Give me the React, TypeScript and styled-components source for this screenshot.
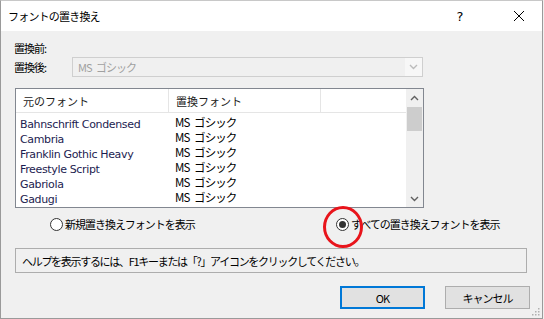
import React from 'react';
import styled, { createGlobalStyle } from 'styled-components';

const GlobalStyle = createGlobalStyle`
    html, body {
        margin: 0;
        padding: 0;
        background: #f0f0f0;
    }
    * { box-sizing: border-box; }
`;

const ui = `"Noto Sans CJK JP", "DejaVu Sans", sans-serif`;

const Dialog = styled.div`
    width: 543px;
    height: 319px;
    border: 1px solid #9a9a9a;
    border-top-color: #c8c8c8;
    background: #f0f0f0;
    display: flex;
    flex-direction: column;
    font-family: ${ui};
    font-size: 11px;
    letter-spacing: -1px;
    word-spacing: 3px;
    color: #000;
    position: relative;
    white-space: nowrap;
`;

const TitleBar = styled.div`
    height: 30px;
    background: #fff;
    display: flex;
    align-items: center;
    padding-left: 7px;
`;

const Title = styled.div`
    flex: 1;
    font-size: 11px;
    letter-spacing: -0.8px;
`;

const CaptionButton = styled.div<{ $gap?: number }>`
    width: 46px;
    height: 30px;
    margin-right: ${p => p.$gap ?? 0}px;
    display: flex;
    align-items: center;
    justify-content: center;
    font-family: "DejaVu Sans", sans-serif;
    font-size: 13px;
    letter-spacing: 0;
`;

const Body = styled.div`
    flex: 1;
    padding: 8px 0 0 13px;
    display: flex;
    flex-direction: column;
`;

const FieldRow = styled.div<{ $h: number }>`
    display: flex;
    align-items: center;
    height: ${p => p.$h}px;
`;

const Label = styled.div`
    width: 58px;
`;

const Combo = styled.div`
    width: 351px;
    height: 20px;
    border: 1px solid #cfcfcf;
    background: #f0f0f0;
    display: flex;
    align-items: center;
    padding-left: 5px;
    color: #a0a0a0;
`;

const ComboText = styled.div`
    flex: 1;
`;

const ComboArrow = styled.div`
    width: 17px;
    height: 18px;
    background: #f7f7f7;
    display: flex;
    align-items: center;
    justify-content: center;
`;

const List = styled.div`
    margin-top: 11px;
    margin-left: 1px;
    width: 409px;
    height: 120px;
    border: 1px solid #828790;
    background: #fff;
    display: flex;
`;

const ListMain = styled.div`
    flex: 1;
    display: flex;
    flex-direction: column;
`;

const Header = styled.div`
    height: 24px;
    display: flex;
    border-bottom: 1px solid #e5e5e5;
`;

const HeaderCell = styled.div<{ $w: number }>`
    width: ${p => p.$w}px;
    height: 100%;
    display: flex;
    align-items: center;
    padding-left: 7px;
    border-right: 1px solid #e5e5e5;
    color: #1a1a1a;
    letter-spacing: 0;
`;

const Rows = styled.div`
    padding-top: 2px;
    display: flex;
    flex-direction: column;
`;

const Row = styled.div`
    height: 15px;
    line-height: 15px;
    display: flex;
    align-items: center;
`;

const FontName = styled.div`
    width: 152px;
    padding-left: 4px;
    font-family: "DejaVu Sans", sans-serif;
    font-size: 11px;
    letter-spacing: -0.35px;
    word-spacing: 0;
    color: #1c1c50;
    transform: translateY(2px);
`;

const Replacement = styled.div`
    padding-left: 7px;
    font-size: 11.5px;
    letter-spacing: -0.9px;
`;

const ScrollBar = styled.div`
    width: 17px;
    background: #f0f0f0;
    display: flex;
    flex-direction: column;
`;

const ScrollArrow = styled.div`
    height: 17px;
    display: flex;
    align-items: center;
    justify-content: center;
`;

const Thumb = styled.div`
    height: 24px;
    margin: 1px 1px 0;
    background: #cdcdcd;
`;

const Track = styled.div`
    flex: 1;
`;

const RadioRow = styled.div`
    display: flex;
    align-items: center;
    height: 18px;
    margin-top: 7px;
    padding-left: 36px;
`;

const RadioItem = styled.label<{ $w?: number }>`
    display: flex;
    align-items: center;
    width: ${p => (p.$w ? `${p.$w}px` : 'auto')};
    gap: 2px;
`;

const RadioCircle = styled.span<{ $checked?: boolean }>`
    width: 13px;
    height: 13px;
    border-radius: 50%;
    border: 1px solid #333;
    background: #fff;
    display: flex;
    align-items: center;
    justify-content: center;
    &::after {
        content: '';
        width: 7px;
        height: 7px;
        border-radius: 50%;
        background: ${p => (p.$checked ? '#333' : 'transparent')};
    }
`;

const Highlight = styled.div`
    position: absolute;
    left: 322px;
    top: 205px;
    width: 40px;
    height: 42px;
    border: 3px solid #e8141b;
    border-radius: 50%;
    pointer-events: none;
`;

const HelpBox = styled.div`
    margin-top: 15px;
    margin-left: 1px;
    width: 512px;
    height: 25px;
    border: 1px solid #adadad;
    display: flex;
    align-items: center;
    padding-left: 6px;
    letter-spacing: -1.3px;
    word-spacing: 0;
`;

const ButtonRow = styled.div`
    display: flex;
    gap: 20px;
    margin-top: 13px;
    margin-left: 326px;
`;

const Button = styled.div<{ $default?: boolean }>`
    width: 85px;
    height: 23px;
    display: flex;
    align-items: center;
    justify-content: center;
    background: #e1e1e1;
    border: ${p => (p.$default ? '2px solid #0078d7' : '1px solid #adadad')};
`;

const Grip = styled.svg`
    position: absolute;
    right: 2px;
    bottom: 2px;
`;

const fonts = [
    'Bahnschrift Condensed',
    'Cambria',
    'Franklin Gothic Heavy',
    'Freestyle Script',
    'Gabriola',
    'Gadugi',
];

const Chevron = ({ up, color = '#606060' }: { up?: boolean; color?: string }) => (
    <svg width="9" height="6" viewBox="0 0 9 6">
        <path
            d={up ? 'M1 5 L4.5 1.5 L8 5' : 'M1 1 L4.5 4.5 L8 1'}
            fill="none"
            stroke={color}
            strokeWidth="1.4"
        />
    </svg>
);

export default function App() {
    return (
        <>
            <GlobalStyle />
            <Dialog>
                <TitleBar>
                    <Title>フォントの置き換え</Title>
                    <CaptionButton $gap={13}>?</CaptionButton>
                    <CaptionButton>
                        <svg width="12" height="12" viewBox="0 0 12 12">
                            <path d="M1 1 L11 11 M11 1 L1 11" stroke="#000" strokeWidth="1" />
                        </svg>
                    </CaptionButton>
                </TitleBar>
                <Body>
                    <FieldRow $h={18}>
                        <Label>置換前:</Label>
                    </FieldRow>
                    <FieldRow $h={20}>
                        <Label>置換後:</Label>
                        <Combo>
                            <ComboText>MS ゴシック</ComboText>
                            <ComboArrow>
                                <Chevron color="#bcbcbc" />
                            </ComboArrow>
                        </Combo>
                    </FieldRow>
                    <List>
                        <ListMain>
                            <Header>
                                <HeaderCell $w={153}>元のフォント</HeaderCell>
                                <HeaderCell $w={152}>置換フォント</HeaderCell>
                            </Header>
                            <Rows>
                                {fonts.map(f => (
                                    <Row key={f}>
                                        <FontName>{f}</FontName>
                                        <Replacement>MS ゴシック</Replacement>
                                    </Row>
                                ))}
                            </Rows>
                        </ListMain>
                        <ScrollBar>
                            <ScrollArrow>
                                <Chevron up />
                            </ScrollArrow>
                            <Thumb />
                            <Track />
                            <ScrollArrow>
                                <Chevron />
                            </ScrollArrow>
                        </ScrollBar>
                    </List>
                    <RadioRow>
                        <RadioItem $w={286}>
                            <RadioCircle />
                            新規置き換えフォントを表示
                        </RadioItem>
                        <RadioItem>
                            <RadioCircle $checked />
                            すべての置き換えフォントを表示
                        </RadioItem>
                    </RadioRow>
                    <HelpBox>ヘルプを表示するには、F1キーまたは「?」アイコンをクリックしてください。</HelpBox>
                    <ButtonRow>
                        <Button $default>OK</Button>
                        <Button>キャンセル</Button>
                    </ButtonRow>
                </Body>
                <Highlight />
                <Grip width="10" height="10" viewBox="0 0 10 10">
                    {[[8, 2], [8, 5], [5, 5], [8, 8], [5, 8], [2, 8]].map(([x, y]) => (
                        <rect key={`${x}-${y}`} x={x} y={y} width="1.5" height="1.5" fill="#b0b0b0" />
                    ))}
                </Grip>
            </Dialog>
        </>
    );
}
